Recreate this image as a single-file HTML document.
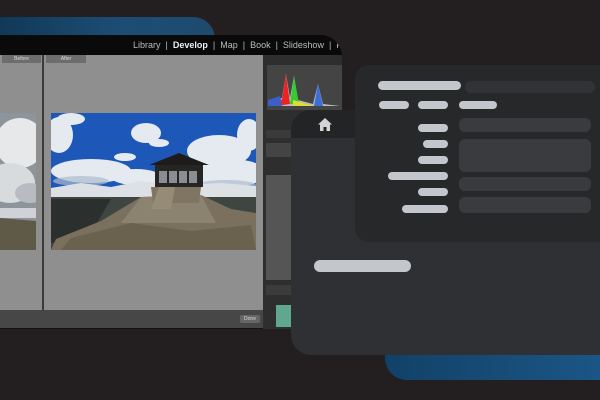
<!DOCTYPE html>
<html><head><meta charset="utf-8"><style>
*{margin:0;padding:0;box-sizing:border-box}
body{width:600px;height:400px;background:#231f20;position:relative;overflow:hidden;font-family:"Liberation Sans",sans-serif}
.abs{position:absolute}
.bar{position:absolute;background:#c3c6ca;border-radius:6px}
.fld{position:absolute;background:#3a3b3e;border-radius:6px}
</style></head><body>
<div class="abs" style="left:-20px;top:17px;width:235px;height:40px;border-radius:0 22px 0 0;background:linear-gradient(90deg,#0f3552,#1d4d74 60%,#1e4a6e)"></div>
<div class="abs" style="left:385px;top:320px;width:240px;height:60px;border-radius:0 0 0 22px;background:linear-gradient(90deg,#124167,#1c5889)"></div>
<div class="abs" style="left:0;top:35px;width:342px;height:294px;background:#111;border-radius:0 22px 0 0;overflow:hidden">
  <div class="abs" style="left:0;top:0;width:342px;height:20px;background:#0a0a0a;color:#bbb;font-size:9px;line-height:20px;white-space:nowrap;padding-left:133px">Library &nbsp;|&nbsp; <b style="color:#eee">Develop</b> &nbsp;|&nbsp; Map &nbsp;|&nbsp; Book &nbsp;|&nbsp; Slideshow &nbsp;|&nbsp; P</div>
  <div class="abs" style="left:0;top:20px;width:263px;height:255px;background:#8f8f8f"></div>
  <div class="abs" style="left:42px;top:20px;width:2px;height:255px;background:#3a3a3a"></div>
  <div class="abs" style="left:2px;top:20px;width:39px;height:8px;background:#6d6d6d;color:#ddd;font-size:5px;text-align:center;line-height:8px">Before</div>
  <div class="abs" style="left:46px;top:20px;width:40px;height:8px;background:#6d6d6d;color:#ddd;font-size:5px;text-align:center;line-height:8px">After</div>
  <div class="abs" style="left:0;top:275px;width:263px;height:18px;background:#474747"></div>
  <div class="abs" style="left:240px;top:280px;width:20px;height:8px;background:#666;border-radius:2px;color:#ddd;font-size:5px;text-align:center;line-height:8px">Done</div>
  <div class="abs" style="left:263px;top:20px;width:79px;height:274px;background:#2e2e2e"></div>
  <div class="abs" style="left:267px;top:30px;width:75px;height:45px;background:#444"></div>
  <svg class="abs" style="left:268px;top:35px" width="72" height="38"><path d="M2 36 L8 30 L14 28 L18 4 L22 28 L26 6 L30 30 L45 34 L50 14 L55 34 L72 36Z" fill="#bbb"/><path d="M8 36 L10 28 L14 30 L18 4 L22 34Z" fill="#e22"/><path d="M22 34 L26 6 L31 34Z" fill="#3c3"/><path d="M46 36 L50 14 L55 36Z" fill="#3a6fd8"/><path d="M25 30 L45 36 L25 36Z" fill="#dd3"/><path d="M0 30 L12 26 L14 36 L0 36Z" fill="#3a5fc8"/></svg>
  <div class="abs" style="left:266px;top:95px;width:76px;height:8px;background:#3a3a3a"></div>
  <div class="abs" style="left:266px;top:108px;width:76px;height:14px;background:#444"></div>
  <div class="abs" style="left:266px;top:140px;width:76px;height:105px;background:#555"></div>
  <div class="abs" style="left:266px;top:250px;width:76px;height:10px;background:#3c3c3c"></div>
  <div class="abs" style="left:276px;top:270px;width:20px;height:22px;background:#5fa88f"></div>
</div>
<svg class="abs" style="left:0;top:113px" width="36" height="137">
<rect width="36" height="137" fill="#8e949b"/>
<ellipse cx="20" cy="30" rx="25" ry="25" fill="#e6e8ea"/><ellipse cx="10" cy="70" rx="25" ry="20" fill="#d8dbde"/><ellipse cx="30" cy="80" rx="15" ry="10" fill="#b8bcc2"/>
<rect y="95" width="36" height="10" fill="#cfd3d8"/>
<path d="M0 105 L36 108 L36 137 L0 137Z" fill="#5f5a48"/>
</svg>
<svg class="abs" style="left:51px;top:113px" width="205" height="137">
<rect width="205" height="85" fill="#1d58b8"/>
<g fill="#f0f2f5" opacity=".95"><ellipse cx="8" cy="22" rx="14" ry="18"/><ellipse cx="20" cy="6" rx="14" ry="6"/><ellipse cx="95" cy="20" rx="15" ry="10"/><ellipse cx="108" cy="30" rx="10" ry="4"/><ellipse cx="74" cy="44" rx="11" ry="4"/><ellipse cx="168" cy="38" rx="32" ry="16"/><ellipse cx="198" cy="22" rx="12" ry="16"/><ellipse cx="40" cy="58" rx="40" ry="12"/><ellipse cx="85" cy="64" rx="25" ry="8"/><ellipse cx="180" cy="60" rx="35" ry="14"/><ellipse cx="130" cy="68" rx="30" ry="6"/></g>
<g fill="#aebccc" opacity=".7"><ellipse cx="30" cy="68" rx="28" ry="5"/><ellipse cx="175" cy="72" rx="30" ry="5"/></g>
<path d="M0 75 L30 70 L60 74 L90 68 L130 72 L170 70 L205 73 L205 86 L0 86Z" fill="#dde1e6"/>
<rect y="84" width="205" height="53" fill="#3f4541"/>
<path d="M0 86 L60 86 L40 120 L0 130Z" fill="#2b2f2e"/>
<path d="M0 137 L5 126 L50 108 L90 84 L150 82 L180 96 L205 100 L205 137Z" fill="#7a705d"/>
<path d="M90 84 L150 82 L165 110 L70 110Z" fill="#8c8270"/>
<path d="M20 125 L80 110 L140 118 L200 112 L205 137 L10 137Z" fill="#6a614f"/>
<rect x="104" y="50" width="48" height="24" fill="#272524"/>
<path d="M98 52 L128 40 L158 52Z" fill="#1e1c1b"/>
<rect x="108" y="58" width="38" height="12" fill="#8a8e92"/>
<g stroke="#272524" stroke-width="2"><line x1="117" y1="58" x2="117" y2="72"/><line x1="127" y1="58" x2="127" y2="72"/><line x1="137" y1="58" x2="137" y2="72"/></g>
<path d="M100 74 L150 74 L148 90 L102 90Z" fill="#7f7562"/>
<path d="M108 74 L124 74 L120 96 L100 96Z" fill="#968b76"/>
</svg>
<div class="abs" style="left:291px;top:110px;width:340px;height:245px;background:#2f3033;border-radius:20px;overflow:hidden">
  <div class="abs" style="left:0;top:0;width:340px;height:28px;background:#232426"></div>
  <svg class="abs" style="left:27px;top:8px" width="14" height="13"><path d="M7 0 L14 6.5 L12 6.5 L12 13 L8.5 13 L8.5 9 L5.5 9 L5.5 13 L2 13 L2 6.5 L0 6.5Z" fill="#d4d4d4"/></svg>
  <div class="bar" style="left:23px;top:150px;width:97px;height:12px"></div>
</div>
<div class="abs" style="left:355px;top:65px;width:270px;height:177px;background:#27282a;border-radius:14px">
  <div class="bar" style="left:23px;top:16px;width:83px;height:9px"></div>
  <div class="fld" style="left:110px;top:16px;width:130px;height:12px;background:#323336"></div>
  <div class="bar" style="left:24px;top:36px;width:30px;height:8px"></div>
  <div class="bar" style="left:63px;top:36px;width:30px;height:8px"></div>
  <div class="bar" style="left:104px;top:36px;width:38px;height:8px"></div>
  <div class="bar" style="left:63px;top:59px;width:30px;height:8px"></div>
  <div class="fld" style="left:104px;top:53px;width:132px;height:14px"></div>
  <div class="bar" style="left:68px;top:75px;width:25px;height:8px"></div>
  <div class="fld" style="left:104px;top:74px;width:132px;height:33px"></div>
  <div class="bar" style="left:63px;top:91px;width:30px;height:8px"></div>
  <div class="bar" style="left:33px;top:107px;width:60px;height:8px"></div>
  <div class="fld" style="left:104px;top:112px;width:132px;height:14px"></div>
  <div class="bar" style="left:63px;top:123px;width:30px;height:8px"></div>
  <div class="bar" style="left:47px;top:140px;width:46px;height:8px"></div>
  <div class="fld" style="left:104px;top:132px;width:132px;height:16px"></div>
</div>
</body></html>
